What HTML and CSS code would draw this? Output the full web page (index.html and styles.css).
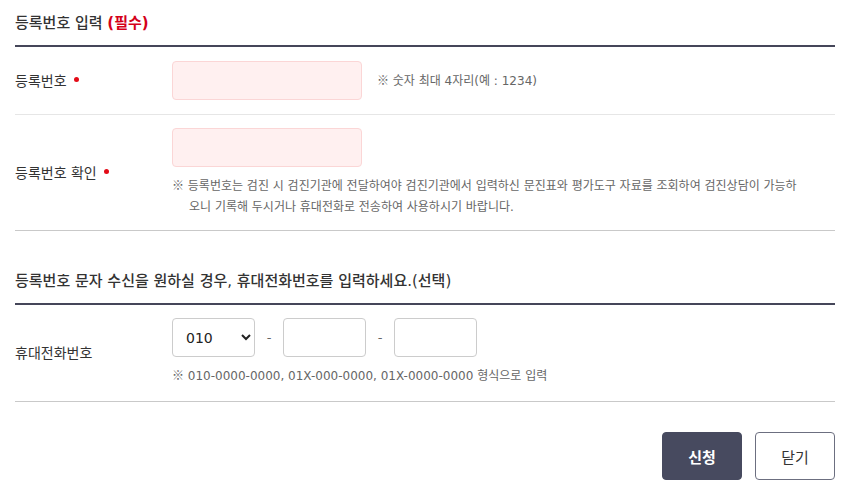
FILE: index.html
```html
<!DOCTYPE html>
<html lang="ko">
<head>
<meta charset="utf-8">
<title>등록번호 입력</title>
<link rel="stylesheet" href="styles.css">
</head>
<body>
<div class="wrap">
  <h2 class="sec-title">등록번호 입력 <span class="req">(필수)</span></h2>
  <div class="row row-first">
    <div class="label">등록번호<span class="dot"></span></div>
    <div class="field field-inline">
      <input class="inp inp-pink" type="password">
      <span class="hint"><span class="mark">※</span> 숫자 최대 4자리(예 : 1234)</span>
    </div>
  </div>
  <div class="row row-last row-second">
    <div class="label">등록번호 확인<span class="dot"></span></div>
    <div class="field">
      <input class="inp inp-pink" type="password">
      <p class="hint hint-block hint-wrap"><span class="mark">※</span> 등록번호는 검진 시 검진기관에 전달하여야 검진기관에서 입력하신 문진표와 평가도구 자료를 조회하여 검진상담이 가능하오니 기록해 두시거나 휴대전화로 전송하여 사용하시기 바랍니다.</p>
    </div>
  </div>

  <h2 class="sec-title sec-second">등록번호 문자 수신을 원하실 경우, 휴대전화번호를 입력하세요.(선택)</h2>
  <div class="row row-last row-phone">
    <div class="label">휴대전화번호</div>
    <div class="field">
      <div class="phone">
        <select class="sel">
          <option>010</option>
          <option>011</option>
          <option>016</option>
          <option>017</option>
          <option>018</option>
          <option>019</option>
        </select>
        <span class="dash">-</span>
        <input class="inp inp-phone" type="text">
        <span class="dash">-</span>
        <input class="inp inp-phone" type="text">
      </div>
      <p class="hint hint-block"><span class="mark">※</span> 010-0000-0000, 01X-000-0000, 01X-0000-0000 형식으로 입력</p>
    </div>
  </div>

  <div class="btns">
    <button class="btn btn-primary" type="button">신청</button>
    <button class="btn btn-line" type="button">닫기</button>
  </div>
</div>
</body>
</html>
```
FILE: styles.css
```css
* { box-sizing: border-box; }
html, body { margin: 0; padding: 0; background: #fff; }
body {
  font-family: "DejaVu Sans", "Noto Sans CJK KR", sans-serif;
  color: #333;
}
.wrap {
  width: 820px;
  margin-left: 15px;
}
.sec-title {
  margin: 0;
  padding: 12px 0 11px;
  font-size: 15px;
  line-height: 22px;
  font-weight: 500;
  color: #333;
  border-bottom: 2px solid #454659;
}
.sec-second { margin-top: 27px; }
.req { color: #d4001a; font-weight: 700; }

.row {
  display: flex;
  align-items: center;
  border-bottom: 1px solid #e6e6e6;
}
.row-last { border-bottom-color: #c9c9c9; }
.row-first { padding: 14px 0 14px; }
.row-second { padding: 13px 0 12px; }
.row-phone { padding: 13px 0 14px; }

.label {
  width: 157px;
  flex: none;
  font-size: 14px;
  line-height: 20px;
  color: #333;
  display: flex;
  align-items: center;
}
.dot {
  width: 5px;
  height: 5px;
  border-radius: 50%;
  background: #e30b17;
  margin-left: 7px;
  margin-bottom: 3px;
}
.field { flex: 1; min-width: 0; }
.field-inline {
  display: flex;
  align-items: center;
  gap: 15px;
}
.inp {
  display: block;
  height: 39px;
  border: 1px solid #ccc;
  border-radius: 4px;
  background: #fff;
  font-family: inherit;
  font-size: 14px;
  padding: 0 12px;
  margin: 0;
  outline: none;
}
.inp-pink {
  width: 190px;
  background: #fff0f0;
  border-color: #fbd6d6;
}
.inp-phone { width: 83px; }
.hint {
  font-size: 12px;
  line-height: 21px;
  color: #666;
  margin: 2px 0 0;
}
.mark {
  font-family: "Noto Sans CJK KR", sans-serif;
  line-height: 1;
}
.hint-block {
  margin: 9px 0 0;
  padding-left: 17px;
  text-indent: -17px;
}
.hint-wrap { max-width: 632px; }
.phone {
  display: flex;
  align-items: center;
}
.sel {
  width: 83px;
  height: 39px;
  border: 1px solid #ccc;
  border-radius: 4px;
  background-color: #fff;
  font-family: inherit;
  font-size: 14px;
  color: #222;
  padding: 0 6px 0 9px;
  margin: 0;
}
.dash {
  width: 28px;
  text-align: center;
  font-size: 13px;
  color: #666;
}
.btns {
  display: flex;
  justify-content: flex-end;
  gap: 13px;
  margin-top: 30px;
}
.btn {
  width: 80px;
  height: 48px;
  border-radius: 4px;
  font-family: inherit;
  font-size: 15px;
  cursor: pointer;
  margin: 0;
  padding: 0;
}
.btn-primary {
  background: #474a5f;
  border: 1px solid #474a5f;
  color: #fff;
  font-weight: 700;
}
.btn-line {
  background: #fff;
  border: 1px solid #6c6f80;
  color: #333;
}
```
